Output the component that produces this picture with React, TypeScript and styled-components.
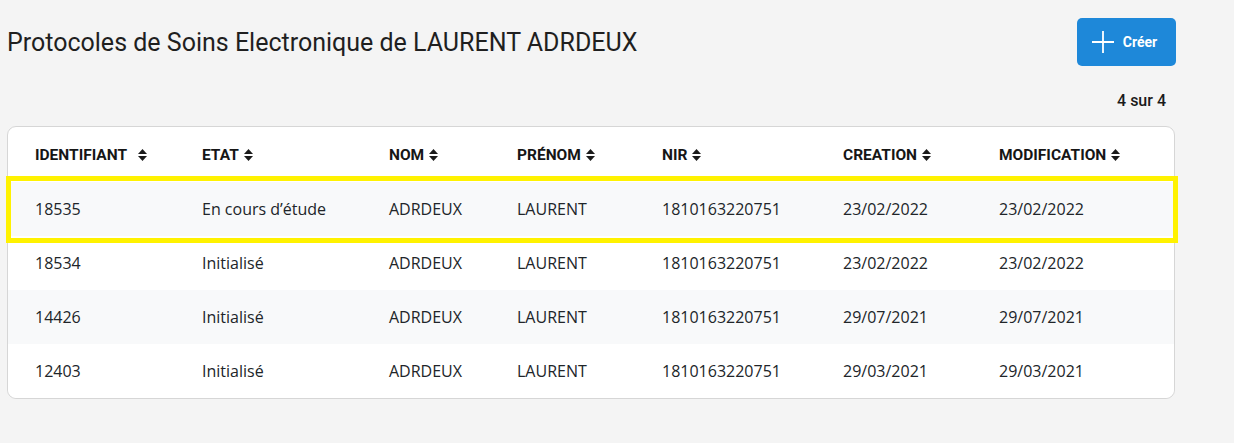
import React from "react";
import styled, { createGlobalStyle } from "styled-components";

const Global = createGlobalStyle`
  html, body { margin: 0; padding: 0; background: #f4f4f4; }
  body { font-family: Roboto, "Liberation Sans", sans-serif; }
`;

const Page = styled.div`
  width: 1169px;
  padding: 18px 0 0 7px;
  display: flex;
  flex-direction: column;
`;

const TopBar = styled.div`
  display: flex;
  align-items: center;
  justify-content: space-between;
  height: 48px;
`;

const Title = styled.h1`
  margin: 0;
  font-family: Roboto, sans-serif;
  font-weight: 400;
  font-size: 25px;
  color: #1f1f1f;
`;

const CreateButton = styled.button`
  width: 99px;
  height: 48px;
  border: none;
  border-radius: 5px;
  background: #1e88d9;
  color: #fff;
  display: flex;
  align-items: center;
  justify-content: center;
  gap: 9px;
  padding: 0 4px 0 0;
  font-family: Roboto, sans-serif;
  font-weight: 700;
  font-size: 14px;
  cursor: pointer;
`;

const Count = styled.div`
  align-self: flex-end;
  margin: 27px 10px 0 0;
  height: 16px;
  line-height: 16px;
  font-family: Roboto, sans-serif;
  font-weight: 500;
  font-size: 16px;
  color: #1a1a1a;
`;

const Card = styled.div`
  margin-top: 17px;
  width: 1168px;
  box-sizing: border-box;
  border: 1px solid #d6d6d6;
  border-radius: 9px;
  background: #fff;
`;

const cols = "167px 187px 128px 145px 181px 156px 1fr";

const HeadRow = styled.div`
  display: grid;
  grid-template-columns: ${cols};
  height: 55px;
  align-items: center;
  padding-left: 27px;
`;

const HeadCell = styled.div<{ $gap?: number }>`
  display: flex;
  align-items: center;
  gap: ${(p) => p.$gap ?? 5}px;
  font-family: Roboto, sans-serif;
  font-weight: 700;
  font-size: 15.5px;
  color: #161616;
`;

const Row = styled.div<{ $striped?: boolean; $highlight?: boolean }>`
  position: relative;
  display: grid;
  grid-template-columns: ${cols};
  height: 54px;
  align-items: center;
  padding-left: 27px;
  background: ${(p) => (p.$striped ? "#f8f9fa" : "#fff")};
  &:last-child {
    border-radius: 0 0 9px 9px;
  }
  ${(p) =>
    p.$highlight &&
    `
    &::after {
      content: "";
      position: absolute;
      z-index: 2;
      top: -6px;
      bottom: -7px;
      left: -2px;
      right: -4px;
      border: 5px solid #fff200;
      pointer-events: none;
    }
  `}
`;

const Cell = styled.div`
  font-family: "Open Sans", sans-serif;
  font-size: 16px;
  color: #212529;
`;

const SortIcon = () => (
  <svg width="9" height="12" viewBox="0 0 9 12" aria-hidden>
    <path d="M4.5 0 L9 5 H0 Z" fill="#1b1b1b" />
    <path d="M4.5 12 L9 7 H0 Z" fill="#1b1b1b" />
  </svg>
);

const PlusIcon = () => (
  <svg width="22" height="22" viewBox="0 0 22 22" aria-hidden>
    <path d="M11 0 V22 M0 11 H22" stroke="#fff" strokeWidth="1.8" />
  </svg>
);

const headers: { label: string; gap?: number }[] = [
  { label: "IDENTIFIANT", gap: 11 },
  { label: "ETAT" },
  { label: "NOM" },
  { label: "PRÉNOM" },
  { label: "NIR" },
  { label: "CREATION" },
  { label: "MODIFICATION" },
];

const rows = [
  ["18535", "En cours d’étude", "ADRDEUX", "LAURENT", "1810163220751", "23/02/2022", "23/02/2022"],
  ["18534", "Initialisé", "ADRDEUX", "LAURENT", "1810163220751", "23/02/2022", "23/02/2022"],
  ["14426", "Initialisé", "ADRDEUX", "LAURENT", "1810163220751", "29/07/2021", "29/07/2021"],
  ["12403", "Initialisé", "ADRDEUX", "LAURENT", "1810163220751", "29/03/2021", "29/03/2021"],
];

export default function App() {
  return (
    <>
      <Global />
      <Page>
        <TopBar>
          <Title>Protocoles de Soins Electronique de LAURENT ADRDEUX</Title>
          <CreateButton>
            <PlusIcon />
            Créer
          </CreateButton>
        </TopBar>
        <Count>4 sur 4</Count>
        <Card>
          <HeadRow>
            {headers.map((h) => (
              <HeadCell key={h.label} $gap={h.gap}>
                {h.label}
                <SortIcon />
              </HeadCell>
            ))}
          </HeadRow>
          {rows.map((r, i) => (
            <Row key={r[0]} $striped={i % 2 === 0} $highlight={i === 0}>
              {r.map((c, j) => (
                <Cell key={j}>{c}</Cell>
              ))}
            </Row>
          ))}
        </Card>
      </Page>
    </>
  );
}
